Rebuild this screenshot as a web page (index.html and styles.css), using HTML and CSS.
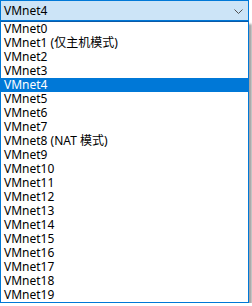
FILE: index.html
```html
<!DOCTYPE html>
<html lang="zh-CN">
<head>
<meta charset="utf-8">
<link rel="stylesheet" href="styles.css">
</head>
<body>
<div class="dropdown">
  <div class="combo">
    <span class="combo-text">VMnet4</span>
    <svg class="chevron" width="9" height="5" viewBox="0 0 9 5"><path d="M0.5 0.5 L4.5 4.5 L8.5 0.5" fill="none" stroke="#505050" stroke-width="1"/></svg>
  </div>
  <ul class="list">
    <li>VMnet0</li>
    <li>VMnet1 (仅主机模式)</li>
    <li>VMnet2</li>
    <li>VMnet3</li>
    <li class="selected">VMnet4</li>
    <li>VMnet5</li>
    <li>VMnet6</li>
    <li>VMnet7</li>
    <li>VMnet8 (NAT 模式)</li>
    <li>VMnet9</li>
    <li>VMnet10</li>
    <li>VMnet11</li>
    <li>VMnet12</li>
    <li>VMnet13</li>
    <li>VMnet14</li>
    <li>VMnet15</li>
    <li>VMnet16</li>
    <li>VMnet17</li>
    <li>VMnet18</li>
    <li>VMnet19</li>
  </ul>
</div>
</body>
</html>
```
FILE: styles.css
```css
html, body {
  margin: 0;
  padding: 0;
  background: #ffffff;
}
body {
  font-family: "Noto Sans", "Noto Sans CJK SC", sans-serif;
  font-size: 12px;
  color: #000000;
}
.dropdown {
  width: 249px;
}
.combo {
  box-sizing: border-box;
  height: 21px;
  border: 1px solid #0078d7;
  background: #cce4f7;
  display: flex;
  align-items: center;
  justify-content: space-between;
  padding: 0 5px 0 3px;
}
.combo-text {
  line-height: 14px;
}
.chevron {
  display: block;
  margin-top: 2px;
}
.list {
  list-style: none;
  margin: 0;
  padding: 0;
  border: 1px solid #0078d7;
  border-top: 1px solid #0a5aa8;
  background: #ffffff;
  box-shadow: 3px 3px 2px rgba(0, 0, 0, 0.35);
}
.list li {
  height: 14px;
  line-height: 14px;
  padding-left: 3px;
  white-space: nowrap;
}
.list li.selected {
  background: #0078d7;
  color: #ffffff;
}
```
